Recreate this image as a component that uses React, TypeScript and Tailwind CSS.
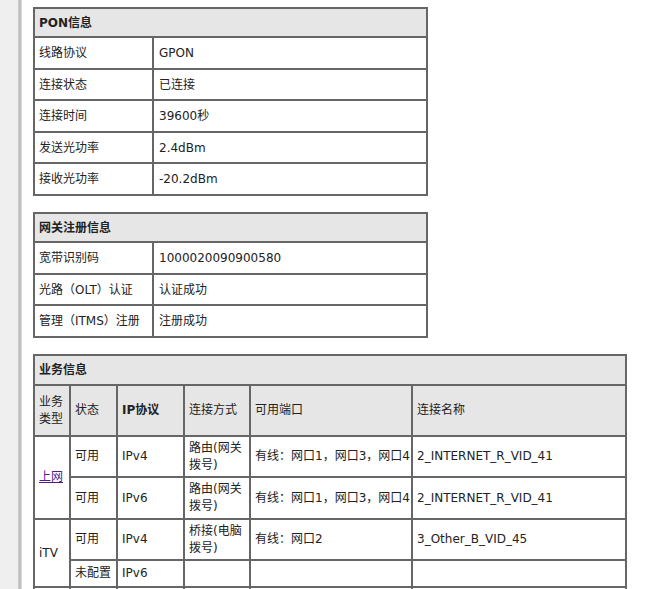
import React from 'react';

const font = { fontFamily: '"DejaVu Sans", "Noto Sans CJK SC", sans-serif' };

const cell = 'border-2 border-[#666] px-[4px] py-0 text-left align-middle font-normal';
const head = 'border-2 border-[#666] bg-[#e6e6e6] px-[4px] py-0 text-left align-middle font-bold';

const ponRows: [string, string][] = [
  ['线路协议', 'GPON'],
  ['连接状态', '已连接'],
  ['连接时间', '39600秒'],
  ['发送光功率', '2.4dBm'],
  ['接收光功率', '-20.2dBm'],
];

const regRows: [string, string][] = [
  ['宽带识别码', '1000020090900580'],
  ['光路（OLT）认证', '认证成功'],
  ['管理（ITMS）注册', '注册成功'],
];

const InfoTable: React.FC<{ title: string; rows: [string, string][] }> = ({ title, rows }) => (
  <table className="w-[395px] table-fixed border-collapse text-[12px] text-[#222]">
    <colgroup>
      <col className="w-[119px]" />
      <col />
    </colgroup>
    <tbody>
      <tr className="h-[29px]">
        <th colSpan={2} className={head}>{title}</th>
      </tr>
      {rows.map(([k, v], i) => (
        <tr key={k} className={i % 2 === 0 ? 'h-[32px]' : 'h-[31px]'}>
          <td className={cell}>{k}</td>
          <td className={cell + ' pl-[5px]'}>{v}</td>
        </tr>
      ))}
    </tbody>
  </table>
);

export default function App() {
  return (
    <div className="flex min-h-[589px] bg-white" style={font}>
      {/* left frame edge */}
      <div className="w-[18px] shrink-0 bg-[#efefef]" />
      <div className="w-[4px] shrink-0 bg-gradient-to-r from-[#d0d0d0] via-[#b8b8b8] to-[#e2e2e2]" />
      <div className="flex flex-col gap-[16px] pl-[11px] pt-[7px]">
        <InfoTable title="PON信息" rows={ponRows} />
        <InfoTable title="网关注册信息" rows={regRows} />

        <table className="w-[594px] table-fixed border-collapse text-[12px] leading-[17px] text-[#222]">
          <colgroup>
            <col className="w-[36px]" />
            <col className="w-[47px]" />
            <col className="w-[67px]" />
            <col className="w-[66px]" />
            <col className="w-[162px]" />
            <col />
          </colgroup>
          <tbody>
            <tr className="h-[30px]">
              <th colSpan={6} className={head}>业务信息</th>
            </tr>
            <tr className="h-[51px]">
              <th className={head + ' font-normal'}>业务类型</th>
              <th className={head + ' font-normal'}>状态</th>
              <th className={head}>IP协议</th>
              <th className={head + ' font-normal'}>连接方式</th>
              <th className={head + ' font-normal'}>可用端口</th>
              <th className={head + ' font-normal'}>连接名称</th>
            </tr>
            <tr className="h-[41px]">
              <td rowSpan={2} className={cell}>
                <a href="#" className="text-[#551a8b] underline">上网</a>
              </td>
              <td className={cell}>可用</td>
              <td className={cell}>IPv4</td>
              <td className={cell}>路由(网关拨号)</td>
              <td className={cell + ' whitespace-nowrap'}>有线：网口1，网口3，网口4</td>
              <td className={cell}>2_INTERNET_R_VID_41</td>
            </tr>
            <tr className="h-[42px]">
              <td className={cell}>可用</td>
              <td className={cell}>IPv6</td>
              <td className={cell}>路由(网关拨号)</td>
              <td className={cell + ' whitespace-nowrap'}>有线：网口1，网口3，网口4</td>
              <td className={cell}>2_INTERNET_R_VID_41</td>
            </tr>
            <tr className="h-[41px]">
              <td rowSpan={2} className={cell}>iTV</td>
              <td className={cell}>可用</td>
              <td className={cell}>IPv4</td>
              <td className={cell}>桥接(电脑拨号)</td>
              <td className={cell}>有线：网口2</td>
              <td className={cell}>3_Other_B_VID_45</td>
            </tr>
            <tr className="h-[27px]">
              <td className={cell + ' whitespace-nowrap'}>未配置</td>
              <td className={cell}>IPv6</td>
              <td className={cell}></td>
              <td className={cell}></td>
              <td className={cell}></td>
            </tr>
            <tr className="h-[27px]">
              <td className={cell}></td>
              <td className={cell}></td>
              <td className={cell}></td>
              <td className={cell}></td>
              <td className={cell}></td>
              <td className={cell}></td>
            </tr>
          </tbody>
        </table>
      </div>
    </div>
  );
}
